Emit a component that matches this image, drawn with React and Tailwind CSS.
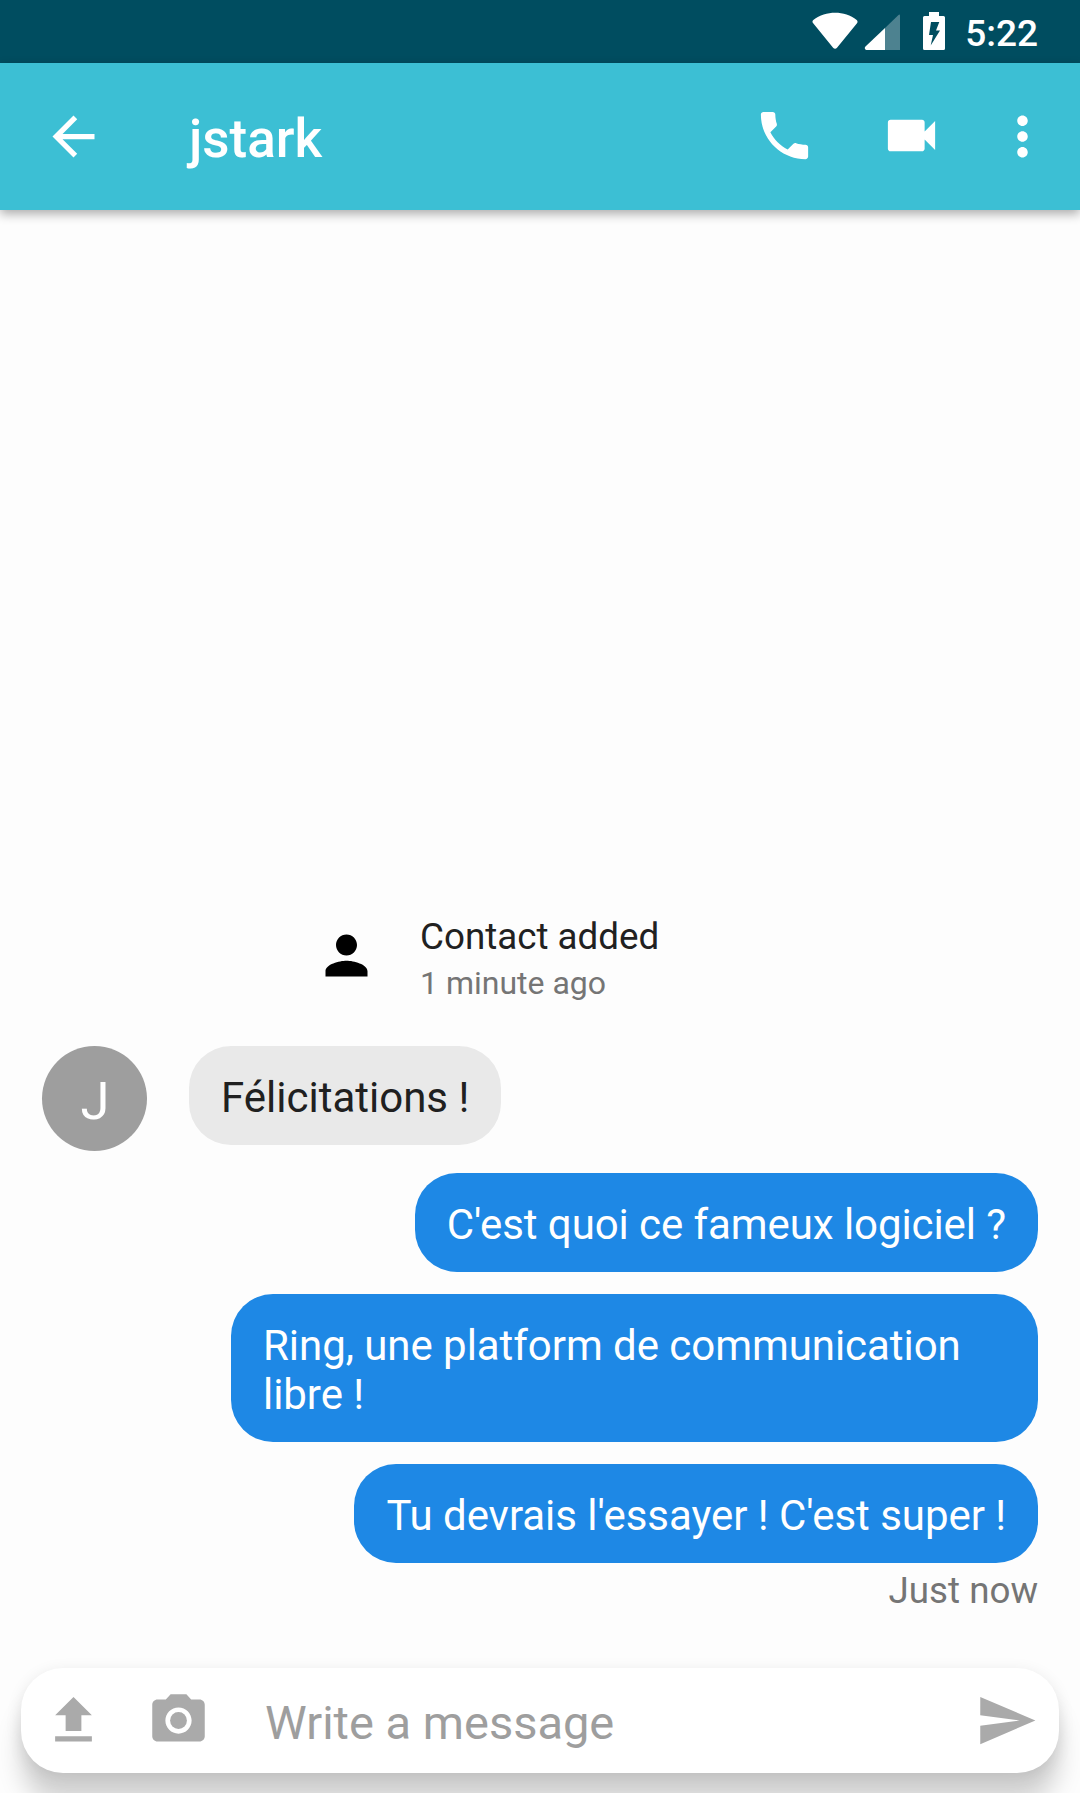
const ICONS = {
  back: 'M20 11H7.83l5.59-5.59L12 4l-8 8 8 8 1.41-1.41L7.83 13H20v-2z',
  call: 'M6.62 10.79c1.44 2.83 3.76 5.14 6.59 6.59l2.2-2.2c.27-.27.67-.36 1.02-.24 1.12.37 2.33.57 3.57.57.55 0 1 .45 1 1V20c0 .55-.45 1-1 1-9.39 0-17-7.61-17-17 0-.55.45-1 1-1h3.5c.55 0 1 .45 1 1 0 1.25.2 2.45.57 3.57.11.35.03.74-.25 1.02l-2.2 2.2z',
  video: 'M17 10.5V7c0-.55-.45-1-1-1H4c-.55 0-1 .45-1 1v10c0 .55.45 1 1 1h12c.55 0 1-.45 1-1v-3.5l4 4v-11l-4 4z',
  more: 'M12 8c1.1 0 2-.9 2-2s-.9-2-2-2-2 .9-2 2 .9 2 2 2zm0 2c-1.1 0-2 .9-2 2s.9 2 2 2 2-.9 2-2-.9-2-2-2zm0 6c-1.1 0-2 .9-2 2s.9 2 2 2 2-.9 2-2-.9-2-2-2z',
  person: 'M12 12c2.21 0 4-1.79 4-4s-1.79-4-4-4-4 1.79-4 4 1.79 4 4 4zm0 2c-2.67 0-8 1.34-8 4v2h16v-2c0-2.66-5.33-4-8-4z',
  upload: 'M9 16h6v-6h4l-7-7-7 7h4zm-4 2h14v2H5z',
  send: 'M2.01 21L23 12 2.01 3 2 10l15 2-15 2z',
};

function Icon({ name, className = '' }) {
  return (
    <svg viewBox="0 0 24 24" fill="currentColor" className={`size-[63px] shrink-0 ${className}`}>
      <path d={ICONS[name]} />
    </svg>
  );
}

function CameraIcon({ className = '' }) {
  return (
    <svg viewBox="0 0 24 24" fill="currentColor" className={`size-[63px] shrink-0 ${className}`}>
      <circle cx="12" cy="12" r="3.2" />
      <path d="M9 2L7.17 4H4c-1.1 0-2 .9-2 2v12c0 1.1.9 2 2 2h16c1.1 0 2-.9 2-2V6c0-1.1-.9-2-2-2h-3.17L15 2H9zm3 15c-2.76 0-5-2.24-5-5s2.24-5 5-5 5 2.24 5 5-2.24 5-5 5z" />
    </svg>
  );
}

function StatusBar() {
  return (
    <div className="flex h-[63px] shrink-0 justify-end bg-[#004d60] pr-[42px] text-white">
      <svg viewBox="0 0 135 63" fill="currentColor" className="mr-[18px] h-[63px] w-[135px]">
        <path d="M1.2 23.2C.2 22.2.2 21 1.300 20C14 10.300 32.500 10.300 44.700 20C45.700 21 45.800 22.200 45 23.200L25 47.800C23.900 49.200 22.200 49.200 21.100 47.800Z" />
        <path d="M88 50V15.500Q88 14 86.500 15L73 28V50Z" opacity=".3" />
        <path d="M73 28L53.500 46.500C52 48 53 50 55 50H73Z" />
        <path fillRule="evenodd" d="M117 12H127V16H131.500Q133 16 133 17.500V48.500Q133 50 131.500 50H112.500Q111 50 111 48.500V17.500Q111 16 112.500 16H117ZM119 22L117 35H121L118.700 45.500L128 30.500H124L127.300 22Z" />
      </svg>
      <span className="text-[37px] leading-[67px] font-medium">5:22</span>
    </div>
  );
}

function Toolbar() {
  return (
    <header className="z-10 flex h-[147px] shrink-0 items-center bg-[#3cbfd4] pr-[26px] pl-[42px] text-white shadow-[0_4px_10px_rgba(0,0,0,0.32)]">
      <Icon name="back" />
      <h1 className="ml-[84px] flex-1 pt-[4px] text-[53px] leading-[62px] font-medium">jstark</h1>
      <Icon name="call" className="mb-[2px]" />
      <Icon name="video" className="mb-[2px] ml-[64px]" />
      <Icon name="more" className="ml-[48px]" />
    </header>
  );
}

function Bubble({ sent, className = '', children }) {
  const tone = sent ? 'self-end bg-[#1e88e5] text-white' : 'bg-[#e9e9e9] text-[#202020]';
  return (
    <div className={`max-w-[807px] rounded-[42px] px-[32px] pt-[27px] pb-[23px] text-[42px] leading-[49px] ${tone} ${className}`}>
      {children}
    </div>
  );
}

function Conversation() {
  return (
    <main className="flex flex-1 flex-col justify-end pr-[42px] pb-[53px] pl-[42px]">
      <div className="mb-[41px] ml-[273px] flex">
        <Icon name="person" className="mt-[10px] text-black" />
        <div className="ml-[42px]">
          <p className="text-[36.75px] leading-[45px] text-[#212121]">Contact added</p>
          <p className="h-[46px] text-[32px] leading-[49px] text-[#757575]">1 minute ago</p>
        </div>
      </div>
      <div className="flex items-start">
        <div className="mr-[42px] flex size-[105px] items-center justify-center rounded-full bg-[#9e9e9e] pt-[6px] pl-[1px] text-[52.5px] leading-none text-white">
          J
        </div>
        <Bubble>Félicitations !</Bubble>
      </div>
      <div className="mt-[22px] flex flex-col gap-[22px]">
        <Bubble sent className="tracking-[-0.08px]">C'est quoi ce fameux logiciel ?</Bubble>
        <Bubble sent className="tracking-[-0.05px]">Ring, une platform de communication libre !</Bubble>
        <Bubble sent className="tracking-[-0.05px]">Tu devrais l'essayer ! C'est super !</Bubble>
      </div>
      <p className="mt-[4px] text-right text-[36.75px] leading-[48px] text-[#757575]">Just now</p>
    </main>
  );
}

function Composer() {
  return (
    <footer className="mx-[21px] mb-[20px] flex h-[105px] shrink-0 items-center rounded-[42px] bg-white pr-[21px] pl-[21px] text-[#aaaaaa] shadow-[0_31px_24px_rgba(0,0,0,0.17),0_4px_16px_rgba(0,0,0,0.1)]">
      <Icon name="upload" />
      <CameraIcon className="ml-[42px]" />
      <span className="ml-[55px] flex-1 pt-[5px] text-[47px] leading-[56px] text-[#9e9e9e]">Write a message</span>
      <Icon name="send" />
    </footer>
  );
}

export default function App() {
  return (
    <div className="flex h-[1793px] w-[1080px] flex-col overflow-hidden bg-[#fdfdfd] font-['Roboto',sans-serif]">
      <StatusBar />
      <Toolbar />
      <Conversation />
      <Composer />
    </div>
  );
}
